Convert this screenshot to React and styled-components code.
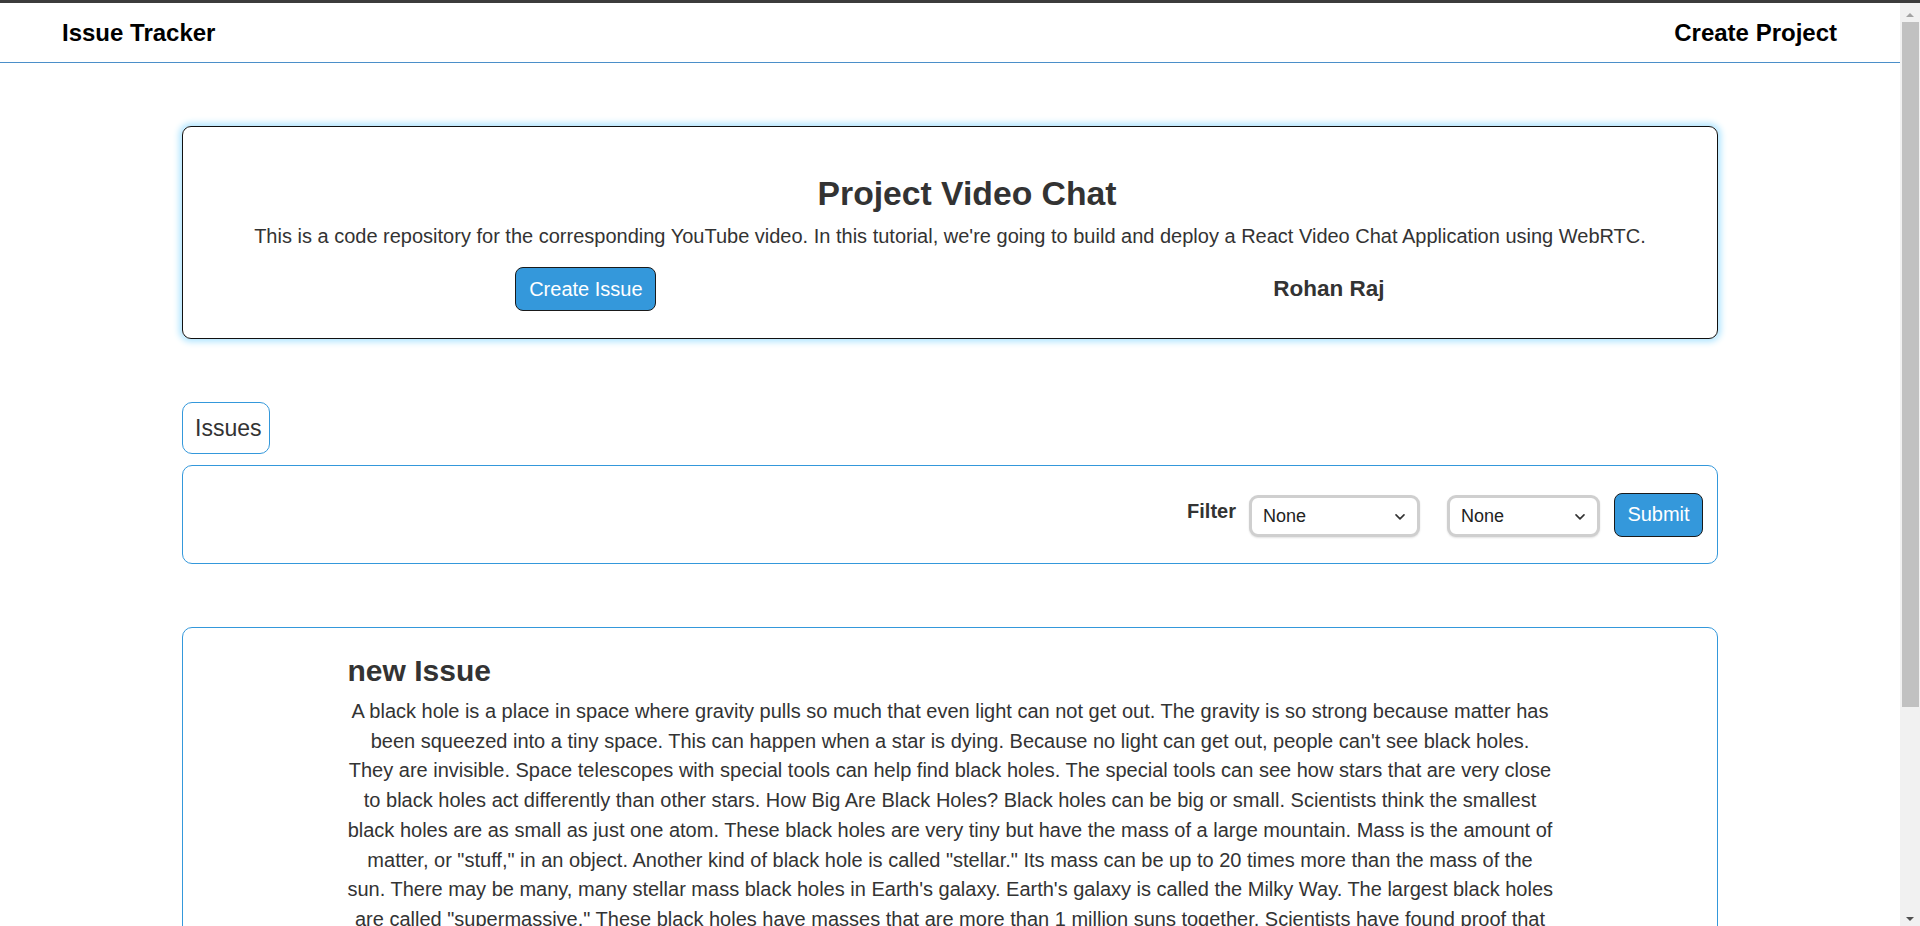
import styled, { createGlobalStyle } from "styled-components";
import { ChevronDown } from "lucide-react";

// the issue body, broken where the original page broke it
const ISSUE_LINES = [
  "A black hole is a place in space where gravity pulls so much that even light can not get out. The gravity is so strong because matter has",
  "been squeezed into a tiny space. This can happen when a star is dying. Because no light can get out, people can't see black holes.",
  "They are invisible. Space telescopes with special tools can help find black holes. The special tools can see how stars that are very close",
  "to black holes act differently than other stars. How Big Are Black Holes? Black holes can be big or small. Scientists think the smallest",
  "black holes are as small as just one atom. These black holes are very tiny but have the mass of a large mountain. Mass is the amount of",
  "matter, or \"stuff,\" in an object. Another kind of black hole is called \"stellar.\" Its mass can be up to 20 times more than the mass of the",
  "sun. There may be many, many stellar mass black holes in Earth's galaxy. Earth's galaxy is called the Milky Way. The largest black holes",
  "are called \"supermassive.\" These black holes have masses that are more than 1 million suns together. Scientists have found proof that",
  "every large galaxy contains a supermassive black hole at its center. The supermassive black hole at the center of the Milky Way galaxy is called Sagittarius A. It has a mass equal to about 4 million suns and would fit inside a very large ball that could hold a few million Earths.",
];

export default function App() {
  return (
    <>
      <GlobalStyle />
      <Header>
        <Brand>Issue Tracker</Brand>
        <NavItem>Create Project</NavItem>
      </Header>

      <Main>
        <ProjectCard>
          <ProjectTitle>Project Video Chat</ProjectTitle>
          <ProjectDesc>
            This is a code repository for the corresponding YouTube video. In
            this tutorial, we're going to build and deploy a React Video Chat
            Application using WebRTC.
          </ProjectDesc>
          <ProjectActions>
            <BlueButton $width={141}>Create Issue</BlueButton>
            <Owner>Rohan Raj</Owner>
          </ProjectActions>
        </ProjectCard>

        <Tab>Issues</Tab>

        <FilterBar>
          <FilterLabel>Filter</FilterLabel>
          <SelectWrap $width={171} $gap={27}>
            <Select defaultValue="none">
              <option value="none">None</option>
              <option value="open">Open</option>
              <option value="closed">Closed</option>
            </Select>
            <Chevron size={16} strokeWidth={2.5} />
          </SelectWrap>
          <SelectWrap $width={153} $gap={14}>
            <Select defaultValue="none">
              <option value="none">None</option>
              <option value="low">Low</option>
              <option value="high">High</option>
            </Select>
            <Chevron size={16} strokeWidth={2.5} />
          </SelectWrap>
          <BlueButton $width={89}>Submit</BlueButton>
        </FilterBar>

        <IssueCard>
          <IssueBody>
            <IssueTitle>new Issue</IssueTitle>
            <IssueText>
              {ISSUE_LINES.map((line, i) => (
                <TextLine key={i} $last={i === ISSUE_LINES.length - 1}>
                  {line}
                </TextLine>
              ))}
            </IssueText>
          </IssueBody>
        </IssueCard>
      </Main>

      <ScrollTrack>
        <ScrollArrow $up />
        <ScrollThumb />
        <ScrollArrow />
      </ScrollTrack>
    </>
  );
}

const GlobalStyle = createGlobalStyle`
  html::-webkit-scrollbar { display: none; }
  body {
    margin: 0;
    padding-right: 20px;
    border-top: 3px solid #3c3c3c;
    background: #fff;
    color: #333;
    font-family: "Liberation Sans", Arial, sans-serif;
  }
`;

const Header = styled.header`
  height: 59px;
  border-bottom: 1px solid #4b8fc9;
  padding: 0 63px 0 62px;
  display: flex;
  align-items: center;
  justify-content: space-between;
  color: #000;
`;

const Brand = styled.div`
  font-size: 24px;
  font-weight: bold;
`;

const NavItem = styled.div`
  font-size: 24px;
  font-weight: bold;
`;

const Main = styled.main`
  width: 1536px;
  margin: 63px auto 0;
  padding-bottom: 64px;
`;

const ProjectCard = styled.section`
  border: 1px solid #111;
  border-radius: 9px;
  box-shadow: 0 0 6px 3px #b3e6ff;
  padding: 47px 0 27px;
  text-align: center;
`;

const ProjectTitle = styled.h1`
  margin: 0 0 12px;
  padding-left: 34px;
  font-size: 33.7px;
  line-height: 39px;
  color: #333;
`;

const ProjectDesc = styled.p`
  margin: 0 0 19px;
  font-size: 20px;
  line-height: 23px;
`;

const ProjectActions = styled.div`
  display: flex;
  justify-content: center;
  align-items: center;
  gap: 617px;
`;

const BlueButton = styled.button`
  width: ${(p) => p.$width}px;
  height: 44px;
  padding: 0;
  background: #3498db;
  border: 1px solid #1a1a1a;
  border-radius: 8px;
  color: #fff;
  font-family: inherit;
  font-size: 20px;
  cursor: pointer;
`;

const Owner = styled.div`
  font-size: 22.5px;
  font-weight: bold;
  color: #333;
`;

const Tab = styled.div`
  display: inline-flex;
  align-items: center;
  margin-top: 63px;
  height: 50px;
  padding: 0 8px 0 12px;
  border: 1px solid #3498db;
  border-radius: 10px;
  font-size: 23px;
  color: #333;
`;

const FilterBar = styled.div`
  margin-top: 11px;
  height: 97px;
  border: 1px solid #3498db;
  border-radius: 10px;
  padding-right: 14px;
  display: flex;
  align-items: center;
  justify-content: flex-end;
`;

const FilterLabel = styled.span`
  margin: 0 13px 6px 0;
  font-size: 20px;
  font-weight: bold;
  color: #333;
`;

const SelectWrap = styled.div`
  position: relative;
  width: ${(p) => p.$width}px;
  height: 42px;
  margin: 2px ${(p) => p.$gap}px 0 0;
`;

const Select = styled.select`
  appearance: none;
  width: 100%;
  height: 100%;
  padding: 0 30px 0 11px;
  border: 3px solid #cfcfcf;
  border-radius: 9px;
  background: #fff;
  box-shadow: 0 1px 2px rgba(0, 0, 0, 0.12);
  font-family: inherit;
  font-size: 18px;
  color: #222;
  outline: none;
`;

const Chevron = styled(ChevronDown)`
  position: absolute;
  right: 12px;
  top: 50%;
  transform: translateY(-45%);
  color: #333;
  pointer-events: none;
`;

const IssueCard = styled.section`
  margin-top: 63px;
  border: 1px solid #3498db;
  border-radius: 10px;
  padding: 25px 0 40px;
`;

const IssueBody = styled.div`
  width: 1205px;
  margin: 0 auto;
`;

const IssueTitle = styled.h2`
  margin: 0 0 9px;
  font-size: 30px;
  line-height: 35px;
  color: #333;
`;

const IssueText = styled.p`
  margin: 0;
  font-size: 20px;
  line-height: 29.7px;
  text-align: center;
  color: #333;
`;

const TextLine = styled.span`
  display: block;
  white-space: ${(p) => (p.$last ? "normal" : "nowrap")};
`;

/* stand-in for the browser scrollbar seen in the screenshot */
const ScrollTrack = styled.div`
  position: fixed;
  top: 3px;
  right: 0;
  bottom: 0;
  width: 20px;
  background: #f1f1f1;
  display: flex;
  flex-direction: column;
  align-items: center;
`;

const ScrollArrow = styled.div`
  flex: none;
  width: 0;
  height: 0;
  margin: ${(p) => (p.$up ? "10px 0 5px" : "auto 0 5px")};
  border-left: 4px solid transparent;
  border-right: 4px solid transparent;
  ${(p) =>
    p.$up
      ? "border-bottom: 4px solid #a3a3a3;"
      : "border-top: 4px solid #505050;"}
`;

const ScrollThumb = styled.div`
  flex: none;
  width: 17px;
  height: 685px;
  background: #c1c1c1;
`;
